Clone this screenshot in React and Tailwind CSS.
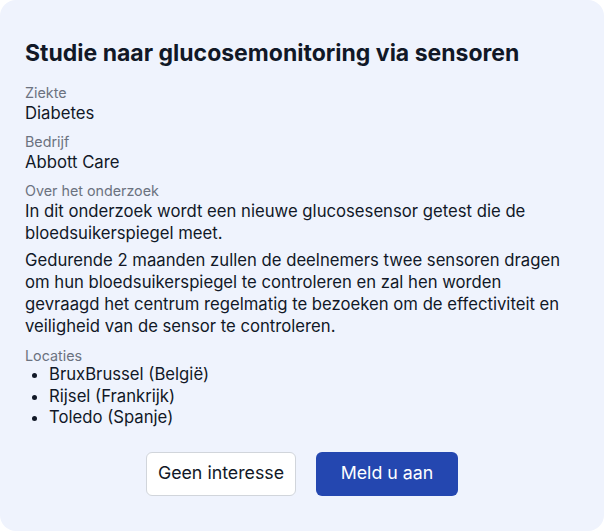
import React from "react";

function Field({ label, children, className = "" }) {
  return (
    <div className={className}>
      <div className="text-[14.3px] leading-[20px] text-[#6b7280]">{label}</div>
      {children}
    </div>
  );
}

export default function App() {
  return (
    <div className="w-[604px] h-[531px] bg-white" style={{ fontFamily: "Inter, 'Noto Sans', sans-serif" }}>
      <div className="w-full h-full rounded-[16px] bg-[#eff3fd] px-[25px] pt-[37px]">
        <h1 className="text-[23px] leading-[32px] font-bold text-[#111827]">
          Studie naar glucosemonitoring via sensoren
        </h1>
        <Field label="Ziekte" className="mt-[14px]">
          <div className="text-[16.7px] leading-[21px] text-[#111827]">Diabetes</div>
        </Field>
        <Field label="Bedrijf" className="mt-[8px]">
          <div className="text-[16.7px] leading-[21px] text-[#111827]">Abbott Care</div>
        </Field>
        <Field label="Over het onderzoek" className="mt-[8px]">
          <p className="text-[16.7px] leading-[22px] text-[#111827] -mt-[1px]">
            In dit onderzoek wordt een nieuwe glucosesensor getest die de bloedsuikerspiegel meet.
          </p>
          <p className="text-[16.7px] leading-[22px] text-[#111827] mt-[5px]">
            Gedurende 2 maanden zullen de deelnemers twee sensoren dragen om hun bloedsuikerspiegel te controleren en zal hen worden gevraagd het centrum regelmatig te bezoeken om de effectiviteit en veiligheid van de sensor te controleren.
          </p>
        </Field>
        <Field label="Locaties" className="mt-[9px]">
          <ul className="list-disc pl-[24px] -mt-[2px] text-[16.7px] leading-[21.5px] text-[#111827]">
            <li>BruxBrussel (België)</li>
            <li>Rijsel (Frankrijk)</li>
            <li>Toledo (Spanje)</li>
          </ul>
        </Field>
        <div className="flex justify-center gap-[20px] mt-[23px]">
          <button className="w-[150px] h-[44px] rounded-[6px] border border-[#d1d5db] bg-white text-[17.8px] text-[#111827]">
            Geen interesse
          </button>
          <button className="w-[142px] h-[44px] rounded-[6px] bg-[#2447b0] text-[17.8px] text-white">
            Meld u aan
          </button>
        </div>
      </div>
    </div>
  );
}
